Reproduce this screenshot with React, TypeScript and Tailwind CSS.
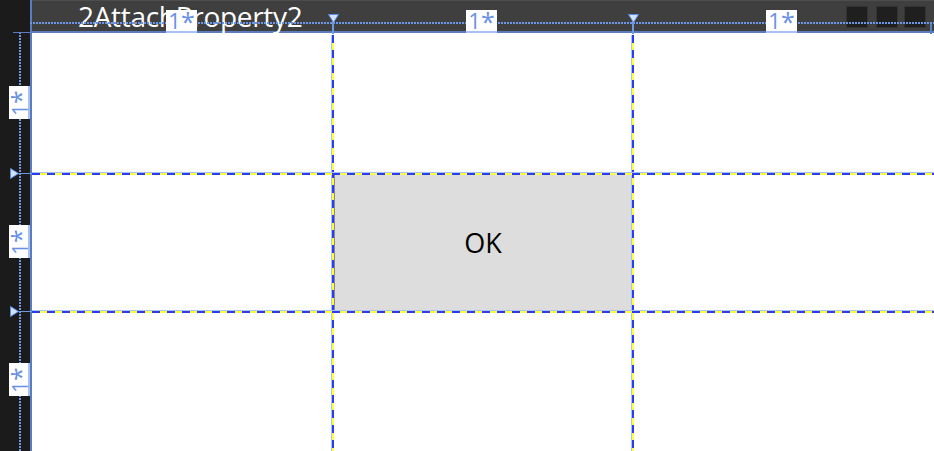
const dash =
  "bg-[image:repeating-linear-gradient(90deg,#2b3cf2_0px,#2b3cf2_8px,#ffff3c_8px,#ffff3c_15px)]";
const dashV =
  "bg-[image:repeating-linear-gradient(180deg,#2b3cf2_0px,#2b3cf2_8px,#ffff3c_8px,#ffff3c_15px)]";
const dotH =
  "bg-[image:repeating-linear-gradient(90deg,#6f96e6_0px,#6f96e6_2px,transparent_2px,transparent_3px)]";
const dotV =
  "bg-[image:repeating-linear-gradient(180deg,#6f96e6_0px,#6f96e6_2px,transparent_2px,transparent_3px)]";

const colX = [332, 632];
const rowY = [173, 311];

const Star = () => (
  <span>
    1<span className="text-[25px] relative top-[2px]">*</span>
  </span>
);

const ColLabel = ({ left }: { left: number }) => (
  <div
    className="absolute top-[10px] w-[31px] h-[23px] bg-white flex items-end justify-center border-b-2 border-[#a9c2f2]"
    style={{ left }}
  >
    <span className="text-[22px] leading-[22px] text-[#6a90e6] whitespace-nowrap">
      <Star />
    </span>
  </div>
);

const RowLabel = ({ top }: { top: number }) => (
  <div
    className="absolute left-[9px] w-[21px] h-[33px] bg-white flex items-center justify-center border-r-2 border-[#a9c2f2]"
    style={{ top }}
  >
    <span className="-rotate-90 text-[21px] leading-[22px] text-[#6a90e6] whitespace-nowrap">
      <Star />
    </span>
  </div>
);

export default function App() {
  return (
    <div className="relative w-[934px] h-[451px] overflow-hidden bg-[#1b1b1b] font-['Open_Sans',sans-serif] flex">
      <div className="w-[30px] shrink-0" />
      <div className="flex-1 flex flex-col border-l-2 border-[#5a7cc0]">
        <div className="h-[33px] shrink-0 bg-[#3f3f3f] border-t border-[#4d4d4d] border-b-2 border-b-[#5b7cbc] flex items-start pl-[46px] pr-[8px]">
          <span className="text-white text-[28px] leading-[30px] tracking-[-0.3px] whitespace-nowrap">
            2AttachProperty2
          </span>
          <div className="ml-auto mt-[5px] flex">
            <div className="w-[22px] h-[22px] bg-[#1f1f1f] border border-[#333]" />
            <div className="w-[22px] h-[22px] bg-[#1f1f1f] border border-[#333] ml-[8px]" />
            <div className="w-[22px] h-[22px] bg-[#1f1f1f] border border-[#333] ml-[6px]" />
          </div>
        </div>
        <div className="flex-1 grid grid-cols-[300px_300px_300px] grid-rows-3 bg-white">
          <div />
          <div />
          <div />
          <div />
          <div className="bg-[#dddddd] border border-[#8a8a8a] mt-[2px] ml-[2px] flex items-center justify-center">
            <span className="text-[27px] text-black">OK</span>
          </div>
          <div />
          <div />
          <div />
          <div />
        </div>
      </div>

      {/* rulers */}
      <div className={`absolute left-[30px] right-0 top-[22px] h-[2px] ${dotH}`} />
      <div className={`absolute left-[19px] top-[32px] bottom-0 w-[2px] ${dotV}`} />
      <div className="absolute left-[13px] top-[32px] w-[18px] h-[1px] bg-[#5a7cc0]" />
      <div className="absolute right-[2px] top-[24px] w-[2px] h-[10px] bg-[#5a7cc0]" />

      {/* column dividers */}
      {colX.map((x) => (
        <div key={x}>
          <div className="absolute top-[20px] h-[14px] w-[2px] bg-[#6e98e0]" style={{ left: x }} />
          <div className={`absolute top-[35px] bottom-0 w-[2px] ${dashV}`} style={{ left: x }} />
          <div className="absolute top-[35px] bottom-0 w-[1px] bg-[#a8c4f0]" style={{ left: x - 1 }} />
          <svg className="absolute top-[14px]" style={{ left: x - 4 }} width="11" height="9">
            <polygon points="0.5,0.5 10.5,0.5 5.5,8.5" fill="#d2e2ff" stroke="#5b8ee6" />
          </svg>
        </div>
      ))}

      {/* row dividers */}
      {rowY.map((y) => (
        <div key={y}>
          <div className="absolute left-[18px] w-[14px] h-[1px] bg-[#6e98e0]" style={{ top: y }} />
          <div className="absolute left-[32px] right-0 h-[1px] bg-[#a8c4f0]" style={{ top: y - 1 }} />
          <div className={`absolute left-[32px] right-0 h-[2px] ${dash}`} style={{ top: y }} />
          <svg className="absolute left-[10px]" style={{ top: y - 5 }} width="9" height="11">
            <polygon points="0.5,0.5 8.5,5.5 0.5,10.5" fill="#d2e2ff" stroke="#5b8ee6" />
          </svg>
        </div>
      ))}

      <ColLabel left={166} />
      <ColLabel left={466} />
      <ColLabel left={766} />
      <RowLabel top={86} />
      <RowLabel top={225} />
      <RowLabel top={363} />
    </div>
  );
}
